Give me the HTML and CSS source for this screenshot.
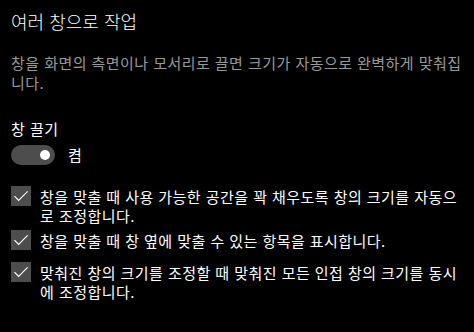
FILE: index.html
```html
<!DOCTYPE html>
<html lang="ko">
  <head>
    <meta charset="UTF-8">
    <title>여러 창으로 작업</title>
    <link rel="stylesheet" href="styles.css">
  </head>
  <body>
    <div class="page">
      <h1 class="titre">여러 창으로 작업</h1>
      <p class="description">창을 화면의 측면이나 모서리로 끌면 크기가 자동으로 완벽하게 맞춰집니다.</p>

      <div class="section">
        <div class="section-nom">창 끌기</div>
        <div class="interrupteur">
          <span class="bascule"><span class="bouton"></span></span>
          <span class="etat">켬</span>
        </div>
      </div>

      <div class="options">
        <label class="option">
          <span class="case"><svg viewBox="0 0 20 20"><path d="M3.5 10.2 L7.6 14.3 L16.6 5.3"/></svg></span>
          <span class="option-texte">창을 맞출 때 사용 가능한 공간을 꽉 채우도록 창의 크기를 자동으로 조정합니다.</span>
        </label>
        <label class="option">
          <span class="case"><svg viewBox="0 0 20 20"><path d="M3.5 10.2 L7.6 14.3 L16.6 5.3"/></svg></span>
          <span class="option-texte">창을 맞출 때 창 옆에 맞출 수 있는 항목을 표시합니다.</span>
        </label>
        <label class="option">
          <span class="case"><svg viewBox="0 0 20 20"><path d="M3.5 10.2 L7.6 14.3 L16.6 5.3"/></svg></span>
          <span class="option-texte">맞춰진 창의 크기를 조정할 때 맞춰진 모든 인접 창의 크기를 동시에 조정합니다.</span>
        </label>
      </div>
    </div>
  </body>
</html>
```

FILE: styles.css
```css
html {
  background: #000;
}
body {
  margin: 0;
  color: #fff;
  font-family: "Noto Sans CJK KR", "Noto Sans", sans-serif;
  font-size: 15px;
  letter-spacing: 0.45px;
}
.page {
  padding: 8px 11px 0 11px;
}
.titre {
  margin: 0;
  font-size: 18px;
  font-weight: 300;
  line-height: 26px;
  letter-spacing: 0;
}
.description {
  margin: 19px 0 0 0;
  color: #999;
  line-height: 20px;
}
.section {
  margin-top: 26px;
}
.section-nom {
  line-height: 20px;
}
.interrupteur {
  display: flex;
  align-items: center;
  margin-top: 6px;
}
.bascule {
  display: flex;
  align-items: center;
  justify-content: flex-end;
  width: 44px;
  height: 20px;
  border-radius: 10px;
  background: #4d4d4d;
  box-sizing: border-box;
  padding-right: 5px;
}
.bouton {
  width: 10px;
  height: 10px;
  border-radius: 50%;
  background: #fff;
}
.etat {
  margin-left: 13px;
  line-height: 20px;
}
.options {
  margin-top: 21px;
}
.option {
  display: flex;
  align-items: flex-start;
  min-height: 27px;
  margin-bottom: 5px;
}
.case {
  flex: none;
  width: 20px;
  height: 20px;
  background: #4d4d4d;
  margin-right: 9px;
}
.case svg {
  display: block;
  width: 20px;
  height: 20px;
  fill: none;
  stroke: #fff;
  stroke-width: 1.2;
}
.option-texte {
  line-height: 19px;
  margin-top: 1px;
}
```
